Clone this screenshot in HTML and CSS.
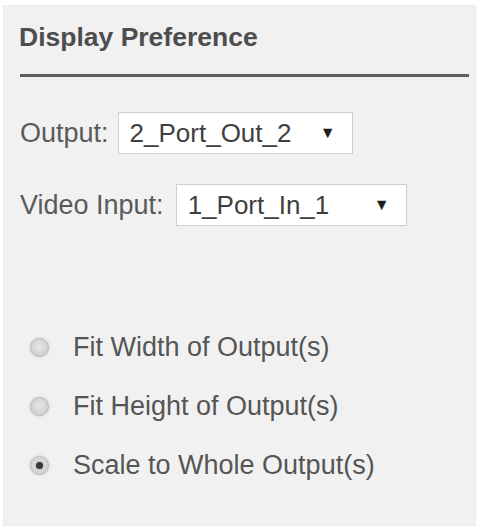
FILE: index.html
```html
<!DOCTYPE html>
<html>
<head>
<meta charset="utf-8">
<link rel="stylesheet" href="styles.css">
</head>
<body>
<div class="panel">
  <h2 class="title">Display Preference</h2>
  <hr class="rule">
  <div class="field field-output">
    <span class="label">Output:</span>
    <div class="select select-output"><span class="value">2_Port_Out_2</span><span class="arrow">&#9660;</span></div>
  </div>
  <div class="field field-input">
    <span class="label">Video Input:</span>
    <div class="select select-input"><span class="value">1_Port_In_1</span><span class="arrow">&#9660;</span></div>
  </div>
  <div class="radios">
    <div class="radio-row"><span class="radio"></span><span class="radio-label">Fit Width of Output(s)</span></div>
    <div class="radio-row"><span class="radio"></span><span class="radio-label">Fit Height of Output(s)</span></div>
    <div class="radio-row"><span class="radio checked"></span><span class="radio-label">Scale to Whole Output(s)</span></div>
  </div>
</div>
</body>
</html>
```
FILE: styles.css
```css
html, body {
  margin: 0;
  padding: 0;
  background: #ffffff;
}
body {
  font-family: "Liberation Sans", Arial, sans-serif;
  color: #555;
}
.panel {
  margin: 5px 5px 0 3px;
  width: 473px;
  height: 521px;
  box-sizing: border-box;
  background: #f1f1f1;
  border: 1px solid #ececec;
  padding: 16px 6px 0 15px;
}
.title {
  margin: 0;
  font-size: 26.5px;
  line-height: 30px;
  font-weight: bold;
  color: #4d4d4f;
}
.rule {
  margin: 22px 0 0 1px;
  border: 0;
  height: 3px;
  background: #5e5e5e;
}
.field {
  display: flex;
  align-items: center;
}
.field-output {
  margin-top: 35px;
}
.field-input {
  margin-top: 30px;
}
.label {
  font-size: 27px;
  color: #5a5a5a;
  margin-left: 1px;
}
.field-output .label { margin-right: 9px; }
.field-input .label { margin-right: 12px; }
.select {
  display: flex;
  align-items: center;
  justify-content: space-between;
  box-sizing: border-box;
  height: 42px;
  background: #fff;
  border: 1px solid #cfcfcf;
  padding: 0 16px 0 11px;
  font-size: 26px;
  color: #3f3f3f;
}
.select-output { width: 235px; }
.select-input { width: 231px; }
.arrow {
  font-size: 16px;
  color: #1e1e1e;
}
.radios {
  margin-top: 111px;
  display: flex;
  flex-direction: column;
  gap: 39px;
}
.radio-row {
  display: flex;
  align-items: center;
  padding-left: 11px;
  height: 20px;
}
.radio {
  width: 19px;
  height: 19px;
  box-sizing: border-box;
  border-radius: 50%;
  border: 1px solid #b9b9b9;
  background: radial-gradient(circle at 50% 45%, #e6e6e6 0%, #d2d2d2 70%, #c4c4c4 100%);
  box-shadow: 0 0 3px rgba(0,0,0,0.18);
  display: flex;
  align-items: center;
  justify-content: center;
  margin-right: 24px;
}
.radio.checked::after {
  content: "";
  width: 7px;
  height: 7px;
  border-radius: 50%;
  background: #3a3a3a;
  box-shadow: 0 0 2px rgba(0,0,0,0.4);
}
.radio-label {
  font-size: 27px;
  color: #555;
}
```
